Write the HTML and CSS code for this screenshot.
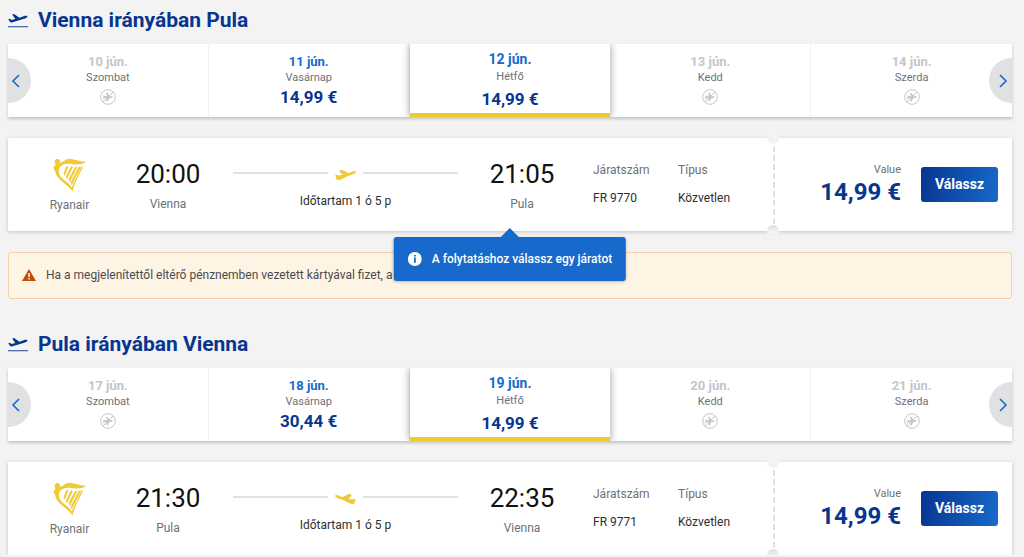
FILE: index.html
```html
<!DOCTYPE html>
<html lang="hu">
<head>
<meta charset="utf-8">
<meta name="viewport" content="width=device-width, initial-scale=1">
<title>Ryanair</title>
<link rel="stylesheet" href="styles.css">
</head>
<body>
<svg class="defs" aria-hidden="true">
  <symbol id="depart" viewBox="0 0 20 16">
    <path d="M.3 7.2 1.6 6.8 3.6 8 7.3 6.9 4.2 2.6 6 2.1 11.5 5.7 15.6 4.2C17 3.700 18.900 3.500 19.300 4.300 19.700 5.200 18.500 6 17 6.500L4.600 10.300C3.200 10.700 2.300 10.400 1.700 9.600Z"/>
    <path d="M0 14h20v1.300H0z" opacity=".7"/>
  </symbol>
  <symbol id="plane" viewBox="0 0 21 12">
    <path d="M.2 6.300C1.500 5.400 2.600 5.700 3.600 6.500L8 5.600C6.500 4 4.800 3.600 4.300 1.900 5.500.8 7 1 8.500 1.600L13.500 4.300C15.700 3.400 18 2.100 20 2 21 2.100 21 3.300 20.300 3.900 18.500 5.200 14.500 6.300 12.300 7.300L6.500 10.300C4.800 11.200 2.400 11.300 1.500 10.200.8 9.200.9 7.600.2 6.300Z"/>
  </symbol>
  <symbol id="noflight" viewBox="0 0 16 16">
    <g fill="none" stroke="currentColor"><circle cx="8" cy="8" r="7.300"/><path d="M3 13 13 3"/></g>
    <path fill="currentColor" d="M3.500 6 5 7.300H7L6 3.700H7.300L9.500 7.300H11.500C13 7.300 13 8.900 11.500 8.900H9.500L7.500 12.500H6.300L7 8.900H5L3.700 10.200H3L3.600 8.100Z"/>
  </symbol>
  <symbol id="harp" viewBox="0 0 34 34">
    <path d="M1.700 4.300A2.800 2.800 0 0 1 7 2.600L6.800 4.600C10 5 11.500 1 16 1 22 .8 26 4 33.500 3.600 31 5.800 25.500 7.400 19.500 6.200 13.500 5 8.700 6 6.600 9.700 5 13 6 17.200 9.200 20.300 13 23.600 17.300 26.500 18.600 29.400L28.600 8.500 30 8.100C28.300 14.500 21.900 22.500 19.500 33.600 16 27.500 8.500 24.300 4.200 18.200 2 15.400 2.500 12.600.9 10.800.2 9.800.7 8.100 2.500 7Z"/>
    <path d="M13.700 8.500 15 8.600 11.500 17.200 11 14.800ZM18 8.900 19.400 9.100 14 20.500 13.500 18.200ZM22.300 9.300 23.800 9.300 16.700 23.500 16.200 20.800ZM26 9.100 27.500 8.900 18.700 26.500 18.300 24Z" stroke="#f1c933" stroke-width=".8"/>
  </symbol>
  <symbol id="prev" viewBox="0 0 10 16"><path d="M8 2 2 8l6 6" fill="none" stroke="currentColor" stroke-width="1.600"/></symbol>
  <symbol id="next" viewBox="0 0 10 16"><path d="m2 2 6 6-6 6" fill="none" stroke="currentColor" stroke-width="1.600"/></symbol>
</svg>
<main class="page">
  <section class="journey">
    <h2 class="title"><svg class="title-icon"><use href="#depart"/></svg>Vienna irányában Pula</h2>
    <div class="carousel">
      <div class="days">
        <button class="day off" disabled><b class="date">10 jún.</b><span class="weekday">Szombat</span><svg class="no-flight"><use href="#noflight"/></svg></button>
        <button class="day"><b class="date">11 jún.</b><span class="weekday">Vasárnap</span><b class="fare">14,99 €</b></button>
        <button class="day selected"><b class="date">12 jún.</b><span class="weekday">Hétfő</span><b class="fare">14,99 €</b></button>
        <button class="day off" disabled><b class="date">13 jún.</b><span class="weekday">Kedd</span><svg class="no-flight"><use href="#noflight"/></svg></button>
        <button class="day off" disabled><b class="date">14 jún.</b><span class="weekday">Szerda</span><svg class="no-flight"><use href="#noflight"/></svg></button>
        <button class="arrow arrow-prev" aria-label="Előző"><svg class="chevron"><use href="#prev"/></svg></button>
        <button class="arrow arrow-next" aria-label="Következő"><svg class="chevron"><use href="#next"/></svg></button>
      </div>
    </div>
    <article class="flight">
      <div class="info">
        <div class="carrier"><svg class="harp"><use href="#harp"/></svg><span>Ryanair</span></div>
        <div class="stop"><span class="time">20:00</span><span class="city">Vienna</span></div>
        <div class="route"><div class="track"><svg class="plane"><use href="#plane"/></svg></div><span>Időtartam 1 ó 5 p</span></div>
        <div class="stop arrival"><span class="time">21:05</span><span class="city">Pula</span></div>
        <dl class="details">
          <div><dt>Járatszám</dt><dd>FR 9770</dd></div>
          <div><dt>Típus</dt><dd>Közvetlen</dd></div>
        </dl>
      </div>
      <div class="buy">
        <div class="cost"><span class="label">Value</span><b class="amount">14,99 €</b></div>
        <button class="choose">Válassz</button>
      </div>
      <div class="tooltip" role="tooltip">
        <svg class="info-icon" viewBox="0 0 14 14"><circle cx="7" cy="7" r="7" fill="#fff"/><path d="M6.200 3h1.800v1.600H6.200zM6.200 5.600h1.800v5.200H6.200z" fill="#176acb"/></svg>
        <span>A folytatáshoz válassz egy járatot</span>
      </div>
    </article>
    <div class="notice" role="alert">
      <svg class="warning" viewBox="0 0 14 12"><path d="M7 0 14 12H0z" fill="#c54b04"/><path d="M6.300 4h1.500v4H6.300zM6.300 9h1.500v1.500H6.300z" fill="#fff"/></svg>
      <span>Ha a megjelenítettől eltérő pénznemben vezetett kártyával fizet, a</span>
    </div>
  </section>
  <section class="journey">
    <h2 class="title"><svg class="title-icon"><use href="#depart"/></svg>Pula irányában Vienna</h2>
    <div class="carousel">
      <div class="days">
        <button class="day off" disabled><b class="date">17 jún.</b><span class="weekday">Szombat</span><svg class="no-flight"><use href="#noflight"/></svg></button>
        <button class="day"><b class="date">18 jún.</b><span class="weekday">Vasárnap</span><b class="fare">30,44 €</b></button>
        <button class="day selected"><b class="date">19 jún.</b><span class="weekday">Hétfő</span><b class="fare">14,99 €</b></button>
        <button class="day off" disabled><b class="date">20 jún.</b><span class="weekday">Kedd</span><svg class="no-flight"><use href="#noflight"/></svg></button>
        <button class="day off" disabled><b class="date">21 jún.</b><span class="weekday">Szerda</span><svg class="no-flight"><use href="#noflight"/></svg></button>
        <button class="arrow arrow-prev" aria-label="Előző"><svg class="chevron"><use href="#prev"/></svg></button>
        <button class="arrow arrow-next" aria-label="Következő"><svg class="chevron"><use href="#next"/></svg></button>
      </div>
    </div>
    <article class="flight">
      <div class="info">
        <div class="carrier"><svg class="harp"><use href="#harp"/></svg><span>Ryanair</span></div>
        <div class="stop"><span class="time">21:30</span><span class="city">Pula</span></div>
        <div class="route"><div class="track"><svg class="plane inbound"><use href="#plane"/></svg></div><span>Időtartam 1 ó 5 p</span></div>
        <div class="stop arrival"><span class="time">22:35</span><span class="city">Vienna</span></div>
        <dl class="details">
          <div><dt>Járatszám</dt><dd>FR 9771</dd></div>
          <div><dt>Típus</dt><dd>Közvetlen</dd></div>
        </dl>
      </div>
      <div class="buy">
        <div class="cost"><span class="label">Value</span><b class="amount">14,99 €</b></div>
        <button class="choose">Válassz</button>
      </div>
    </article>
  </section>
</main>
</body>
</html>
```
FILE: styles.css
```css
* { box-sizing: border-box; }
body {
  margin: 0;
  background: #f3f3f3;
  color: #2e2e2e;
  font: 12px/16px Roboto, "Liberation Sans", sans-serif;
}
button { font: inherit; border: 0; cursor: pointer; }
svg { display: block; flex: none; }
.defs { position: absolute; width: 0; height: 0; }
.page { padding: 0 12px 0 8px; display: grid; gap: 25px; }

.title {
  display: flex;
  align-items: center;
  gap: 10px;
  height: 44px;
  margin: 0;
  padding-bottom: 4px;
  color: #073590;
  font-size: 21px;
  font-weight: 700;
  line-height: 24px;
}
.title-icon { width: 20px; height: 16px; fill: currentColor; }

.carousel { background: #fff; box-shadow: 0 2px 3px rgba(0, 0, 0, .2); }
.days { position: relative; display: grid; grid-template-columns: repeat(5, 1fr); overflow: hidden; }
.day {
  display: flex;
  flex-direction: column;
  align-items: center;
  height: 73px;
  padding: 10px 0 0;
  background: #fff;
  border-right: 1px solid #f3f3f3;
  color: #6d7178;
}
.day:nth-child(5) { border-right: 0; }
.date { color: #176acb; font-size: 13px; font-weight: 700; line-height: 16px; }
.weekday { font-size: 11px; line-height: 16px; }
.fare { margin-top: 1px; color: #073590; font-size: 17px; font-weight: 700; line-height: 20px; }
.off .date { color: #c3c6cb; }
.no-flight { width: 16px; height: 16px; margin-top: 3px; color: #c3c6cb; }
.selected {
  position: relative;
  z-index: 1;
  padding-top: 7px;
  border-right: 0;
  border-bottom: 4px solid #f1c933;
  box-shadow: 0 0 8px rgba(0, 0, 0, .4);
}
.selected .date { font-size: 14px; }
.selected .weekday { line-height: 20px; }
.selected .fare { margin-top: 2px; }
.arrow {
  position: absolute;
  top: 14px;
  width: 23px;
  height: 45px;
  padding: 0;
  display: flex;
  align-items: center;
  background: #dfe1e3;
  color: #176acb;
}
.arrow-prev { left: 0; padding-left: 3px; border-radius: 0 23px 23px 0; }
.arrow-next { right: 0; padding-left: 9px; border-radius: 23px 0 0 23px; }
.chevron { width: 10px; height: 16px; }

.flight {
  position: relative;
  display: flex;
  min-height: 93px;
  margin-top: 21px;
  background: #fff;
  box-shadow: 0 1px 4px rgba(0, 0, 0, .2);
}
.info {
  flex: 1;
  display: grid;
  grid-template-columns: 123px 74px 28px 1fr 28px 72px 35px 85px 95px;
}
.carrier { display: flex; flex-direction: column; align-items: center; padding-top: 20px; color: #6d7178; }
.harp { width: 34px; height: 34px; margin-bottom: 5px; fill: #f1c933; }
.stop { display: flex; flex-direction: column; align-items: center; padding-top: 20px; }
.time { color: #111; font-size: 26px; line-height: 32px; }
.city { margin-top: 6px; color: #6d7178; }
.route { grid-column: 4; display: flex; flex-direction: column; align-items: center; padding-top: 31px; }
.route > span { margin-top: 16px; }
.track { display: flex; width: 100%; height: 8px; align-items: center; gap: 7px; }
.track::before, .track::after { content: ""; flex: 1; height: 2px; background: #dfe1e3; }
.plane { order: 1; width: 21px; height: 12px; margin-top: 4px; fill: #f1c933; }
.track::after { order: 2; }
.inbound { transform: scaleX(-1); }
.arrival { grid-column: 6; }
.details { display: grid; grid-column: 8 / 10; grid-template-columns: 85px 1fr; margin: 0; padding-top: 24px; }
.details dt { color: #6d7178; }
.details dd { margin: 12px 0 0; }

.buy {
  position: relative;
  display: flex;
  align-items: center;
  justify-content: flex-end;
  gap: 20px;
  width: 239px;
  padding-right: 14px;
  background: repeating-linear-gradient(#dfe1e3 0 6px, transparent 6px 9px) 0 8px / 2px 78px no-repeat;
}
.buy::before, .buy::after {
  content: "";
  position: absolute;
  left: -6px;
  width: 12px;
  height: 9px;
  background: #f3f3f3;
}
.buy::before { top: -3px; border-radius: 0 0 6px 6px; }
.buy::after { bottom: -3px; border-radius: 6px 6px 0 0; background: linear-gradient(#dedede, #f3f3f3 7px); }
.cost { display: grid; justify-items: end; gap: 1px; padding-bottom: 1px; }
.label { color: #6d7178; font-size: 11px; line-height: 14px; }
.amount { color: #073590; font-size: 24px; font-weight: 700; line-height: 28px; }
.choose {
  width: 77px;
  height: 35px;
  padding: 0 0 2px;
  border-radius: 3px;
  background: linear-gradient(100deg, #073590, #176acb);
  color: #fff;
  font-size: 14px;
  font-weight: 700;
}

.tooltip {
  position: absolute;
  z-index: 2;
  top: 99px;
  left: 50%;
  transform: translateX(-50%);
  display: flex;
  align-items: center;
  gap: 10px;
  height: 44px;
  padding: 0 14px;
  border-radius: 3px;
  background: #176acb;
  color: #fff;
  font-weight: 500;
  white-space: nowrap;
  box-shadow: 0 1px 3px rgba(0, 0, 0, .25);
}
.tooltip::before {
  content: "";
  position: absolute;
  top: -9px;
  left: 50%;
  margin-left: -10px;
  border: 10px solid transparent;
  border-top: 0;
  border-bottom-color: #176acb;
}
.info-icon { width: 14px; height: 14px; }

.notice {
  display: flex;
  align-items: center;
  gap: 10px;
  min-height: 47px;
  margin-top: 21px;
  padding: 0 13px 2px;
  border: 1px solid #f5cfa9;
  border-radius: 3px;
  background: #fef4e4;
  color: #4b4b4b;
}
.warning { width: 14px; height: 12px; }
```
